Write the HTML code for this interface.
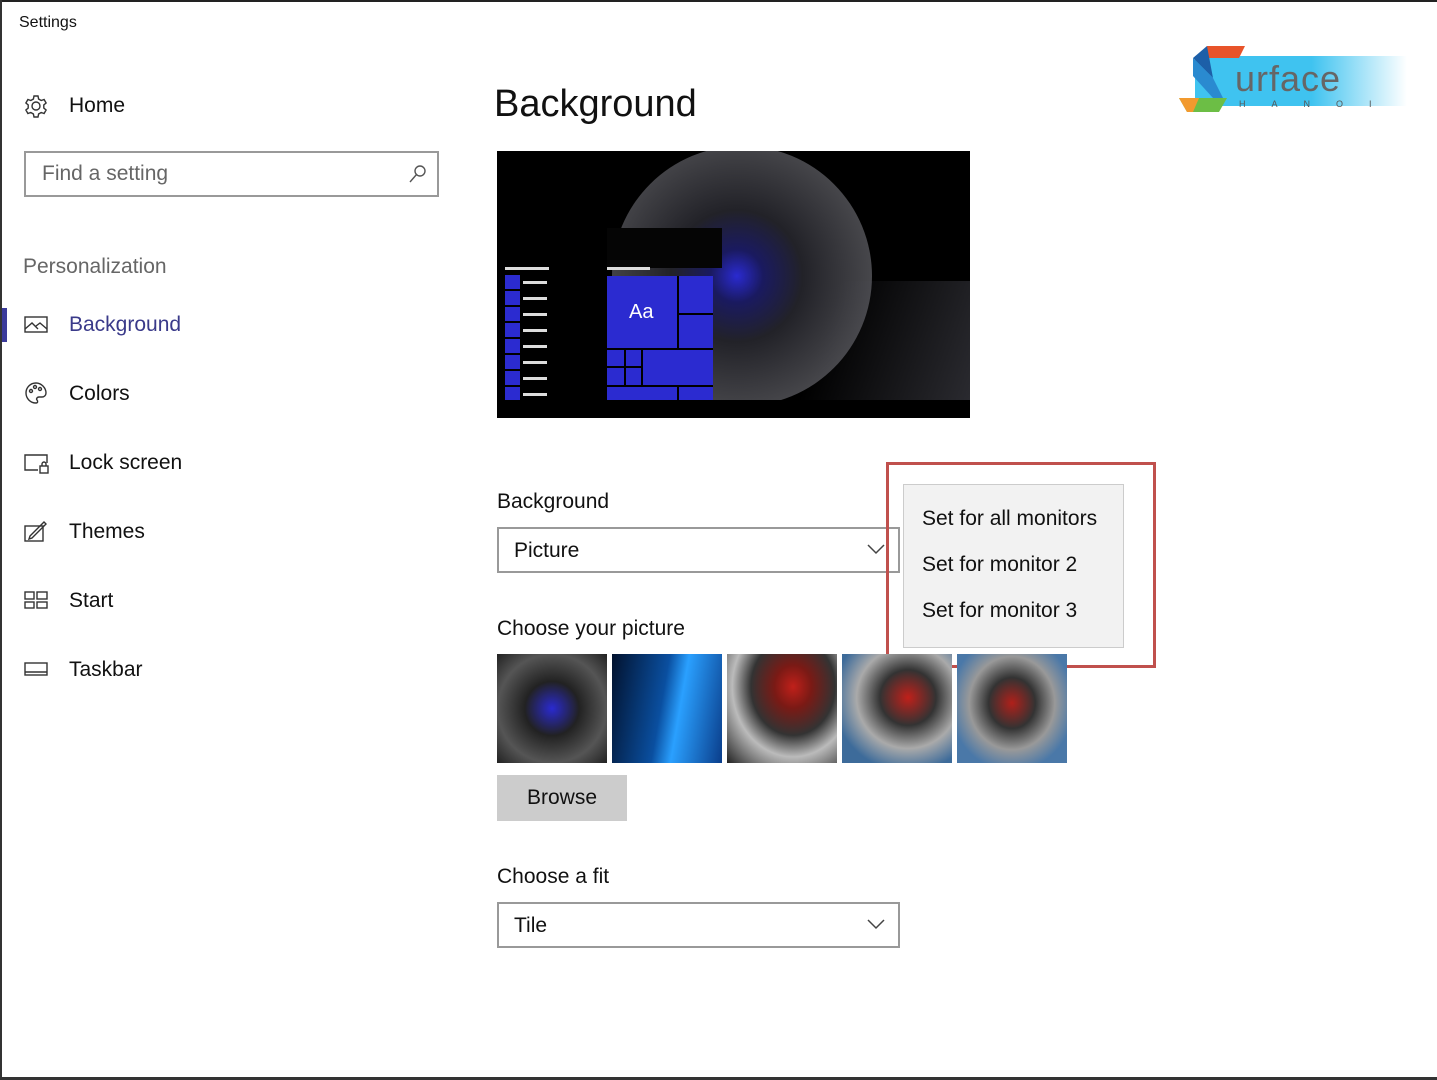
<!DOCTYPE html>
<html><head><meta charset="utf-8"><style>
*{margin:0;padding:0;box-sizing:border-box}
body{width:1437px;height:1080px;background:#fff;font-family:"Segoe UI","Liberation Sans",sans-serif;color:#111;position:relative;overflow:hidden}
.a{position:absolute}
.nav{position:absolute;left:69px;font-size:21px;color:#111}
.ic{position:absolute;left:24px}
.lbl{position:absolute;left:497px;font-size:21px;color:#111}
.dd{position:absolute;left:497px;width:403px;height:46px;border:2px solid #999;font-size:21px;padding:10px 15px}
.th{position:absolute;top:654px;width:110px;height:109px}
</style></head><body>
<div class="a" style="left:0;top:0;width:1437px;height:2px;background:#222"></div>
<div class="a" style="left:0;top:0;width:2px;height:1080px;background:#333"></div>
<div class="a" style="left:0;top:1077px;width:1437px;height:3px;background:#333"></div>
<div class="a" style="left:19px;top:14px;font-size:16px">Settings</div>

<svg class="ic" style="top:94px" width="24" height="24" viewBox="0 0 24 24" fill="none" stroke="#333" stroke-width="1.4"><circle cx="12" cy="12" r="4"/><path d="M10 2h4l.6 3 2.6 1.5 2.9-1 2 3.5-2.3 2v3l2.3 2-2 3.5-2.9-1-2.6 1.5-.6 3h-4l-.6-3-2.6-1.5-2.9 1-2-3.5 2.3-2v-3l-2.3-2 2-3.5 2.9 1 2.6-1.5z"/></svg>
<div class="nav" style="top:94px">Home</div>
<div class="a" style="left:24px;top:151px;width:415px;height:46px;border:2px solid #999"></div>
<div class="a" style="left:42px;top:162px;font-size:21px;color:#666">Find a setting</div>
<svg class="a" style="left:408px;top:164px" width="20" height="20" viewBox="0 0 20 20" fill="none" stroke="#555" stroke-width="1.4"><circle cx="12" cy="7" r="5"/><path d="M8.5 10.5L2 18"/></svg>
<div class="a" style="left:23px;top:255px;font-size:21px;color:#666">Personalization</div>
<div class="a" style="left:2px;top:308px;width:5px;height:34px;background:#3a3a9a"></div>
<svg class="ic" style="top:314px" width="24" height="22" viewBox="0 0 24 22" fill="none" stroke="#333" stroke-width="1.4"><rect x="1" y="3" width="22" height="15"/><path d="M1 15l7-6 6 6M12 12l4-3 7 6"/></svg>
<div class="nav" style="top:313px;color:#3a3a8a">Background</div>
<svg class="ic" style="top:381px" width="24" height="24" viewBox="0 0 24 24" fill="none" stroke="#333" stroke-width="1.4"><path d="M12 2a10 10 0 1 0 0 20c2 0 2-2 1-3s0-3 2-3h3a4 4 0 0 0 4-4c0-5-4.5-10-10-10z"/><circle cx="7" cy="10" r="1.5"/><circle cx="11" cy="6" r="1.5"/><circle cx="16" cy="8" r="1.5"/></svg>
<div class="nav" style="top:382px">Colors</div>
<svg class="ic" style="top:453px" width="26" height="22" viewBox="0 0 26 22" fill="none" stroke="#333" stroke-width="1.4"><path d="M14 17H1V2h22v8"/><rect x="16" y="13" width="8" height="7"/><path d="M18 13v-2a2 2 0 0 1 4 0v2"/></svg>
<div class="nav" style="top:451px">Lock screen</div>
<svg class="ic" style="top:521px" width="24" height="22" viewBox="0 0 24 22" fill="none" stroke="#333" stroke-width="1.4"><rect x="1" y="5" width="18" height="15"/><path d="M6 15l14-14 2 2-14 14-3 1z"/></svg>
<div class="nav" style="top:520px">Themes</div>
<svg class="ic" style="top:591px" width="24" height="18" viewBox="0 0 24 18" fill="none" stroke="#333" stroke-width="1.4"><rect x="1" y="1" width="9" height="7"/><rect x="13" y="1" width="10" height="7"/><rect x="1" y="11" width="9" height="6"/><rect x="13" y="11" width="10" height="6"/></svg>
<div class="nav" style="top:589px">Start</div>
<svg class="ic" style="top:662px" width="24" height="14" viewBox="0 0 24 14" fill="none" stroke="#333" stroke-width="1.4"><rect x="1" y="1" width="22" height="12"/><path d="M1 10h22"/></svg>
<div class="nav" style="top:658px">Taskbar</div>

<div class="a" style="left:494px;top:83px;font-size:38px;font-weight:300">Background</div>

<div class="a" style="left:497px;top:151px;width:473px;height:267px;background:#000;overflow:hidden">
 <div class="a" style="left:115px;top:-5px;width:260px;height:260px;border-radius:50%;background:radial-gradient(circle at 48% 50%,#2a2ad0 0,#1a1a60 14%,#222228 35%,#4a4a4e 75%,#2a2a2a 100%)"></div>
 <div class="a" style="left:300px;top:130px;width:180px;height:120px;background:linear-gradient(110deg,rgba(0,0,0,0) 20%,rgba(80,80,90,.55))"></div>
 <div class="a" style="left:110px;top:77px;width:115px;height:40px;background:#050505"></div>
 <div class="a" style="left:0;top:249px;width:473px;height:18px;background:#000"></div>
 <div class="a" style="left:8px;top:116px;width:44px;height:3px;background:#ddd"></div>
 <div class="a" style="left:110px;top:116px;width:43px;height:3px;background:#ddd"></div>
 <div class="a" style="left:8px;top:124px;width:15px;height:125px;background:repeating-linear-gradient(#2b2bd0 0 14px,#000 14px 16px)"></div>
 <div class="a" style="left:26px;top:130px;width:24px;height:118px;background:repeating-linear-gradient(#ddd 0 3px,transparent 3px 16px)"></div>
 <div class="a" style="left:110px;top:125px;width:106px;height:124px;background:#2b2bd0"></div>
 <div class="a" style="left:180px;top:125px;width:2px;height:72px;background:#000"></div>
 <div class="a" style="left:180px;top:162px;width:36px;height:2px;background:#000"></div>
 <div class="a" style="left:110px;top:197px;width:106px;height:2px;background:#000"></div>
 <div class="a" style="left:110px;top:234px;width:106px;height:2px;background:#000"></div>
 <div class="a" style="left:127px;top:197px;width:2px;height:38px;background:#000"></div>
 <div class="a" style="left:144px;top:197px;width:2px;height:38px;background:#000"></div>
 <div class="a" style="left:110px;top:215px;width:35px;height:2px;background:#000"></div>
 <div class="a" style="left:180px;top:234px;width:2px;height:15px;background:#000"></div>
 <div class="a" style="left:132px;top:150px;color:#fff;font-size:20px">Aa</div>
</div>

<div class="lbl" style="top:490px">Background</div>
<div class="dd" style="top:527px">Picture</div>
<svg class="a" style="left:866px;top:543px" width="20" height="12" viewBox="0 0 20 12" fill="none" stroke="#444" stroke-width="1.5"><path d="M2 2l8 8 8-8"/></svg>

<div class="a" style="left:903px;top:484px;width:221px;height:164px;background:#f2f2f2;border:1px solid #ccc"></div>
<div class="a" style="left:922px;top:507px;font-size:21px">Set for all monitors</div>
<div class="a" style="left:922px;top:553px;font-size:21px">Set for monitor 2</div>
<div class="a" style="left:922px;top:599px;font-size:21px">Set for monitor 3</div>
<div class="a" style="left:886px;top:462px;width:270px;height:206px;border:3px solid #c0504d"></div>

<div class="lbl" style="top:617px">Choose your picture</div>
<div class="th" style="left:497px;background:radial-gradient(circle at 50% 50%,#2a2ad0 0,#222 35%,#555 70%,#222 100%)"></div>
<div class="th" style="left:612px;background:linear-gradient(100deg,#02122e 0,#0a4fa0 45%,#2aa0ff 60%,#0a3d8a 100%)"></div>
<div class="th" style="left:727px;background:radial-gradient(ellipse at 60% 30%,#c0201a 0,#7a1a15 20%,#333 45%,#bbb 65%,#222 100%)"></div>
<div class="th" style="left:842px;background:radial-gradient(ellipse at 60% 40%,#c0201a 0,#333 30%,#aaa 55%,#3d6b9a 80%)"></div>
<div class="th" style="left:957px;background:radial-gradient(ellipse at 50% 45%,#b0201a 0,#333 30%,#999 55%,#4a78a8 80%)"></div>

<div class="a" style="left:497px;top:775px;width:130px;height:46px;background:#ccc;font-size:21px;text-align:center;padding-top:11px">Browse</div>

<div class="lbl" style="top:865px">Choose a fit</div>
<div class="dd" style="top:902px">Tile</div>
<svg class="a" style="left:866px;top:918px" width="20" height="12" viewBox="0 0 20 12" fill="none" stroke="#444" stroke-width="1.5"><path d="M2 2l8 8 8-8"/></svg>

<div class="a" style="left:1195px;top:56px;width:212px;height:50px;background:linear-gradient(90deg,#3fc3f0 55%,rgba(63,195,240,0))"></div>
<svg class="a" style="left:1177px;top:46px" width="70" height="66" viewBox="0 0 70 66"><path d="M30 0h38l-6 12H30z" fill="#e8542a"/><path d="M30 0l-14 12 20 20z" fill="#1d5fa8"/><path d="M16 12l20 20 10 20h-10L16 30z" fill="#2a8ad0"/><path d="M2 52h48l-8 14H10z" fill="#6cbe45"/><path d="M2 52h20l-6 14H10z" fill="#f29a2e"/></svg>
<div class="a" style="left:1235px;top:58px;font-size:36px;color:#666;letter-spacing:1px;font-family:'Liberation Sans',sans-serif">urface</div>
<div class="a" style="left:1239px;top:99px;font-size:9px;color:#555;letter-spacing:26px;font-family:'Liberation Sans',sans-serif">HANOI</div>
</body></html>
